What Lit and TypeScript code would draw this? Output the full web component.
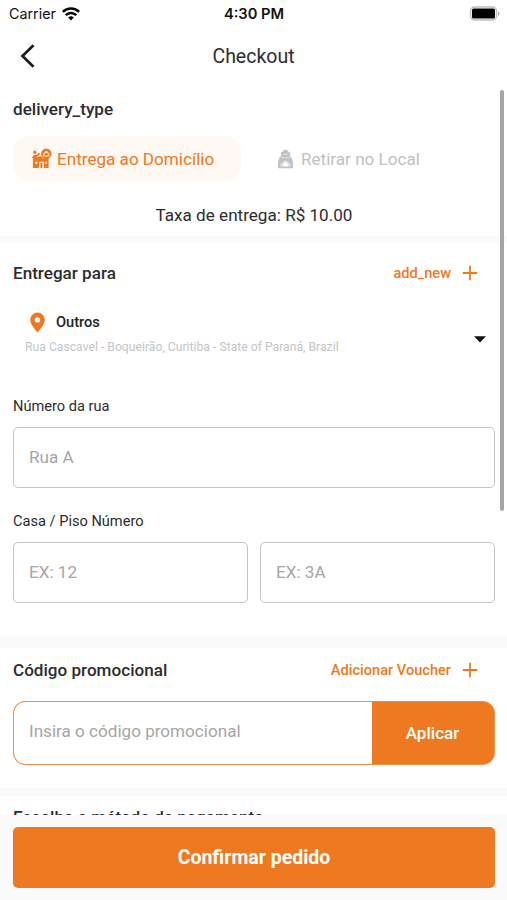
import { LitElement, html, css, svg } from "lit";
import { customElement, property } from "lit/decorators.js";

const plus = svg`<path d="M8 .8v14.400M.8 8h14.400" fill="none" stroke="currentColor" stroke-width="1.800"/>`;

@customElement("text-field")
class TextField extends LitElement {
  @property() hint = "";
  static styles = css`
    :host { display: flex; flex: 1; min-width: 0; }
    .box { flex: 1; box-sizing: border-box; height: 61px; border: 1.5px solid #c4c4c4; border-radius: 5px;
      padding: 0 15px 2px; display: flex; align-items: center; color: #a6a6a6; font-size: 17.1px; background: #fff; }
  `;
  render() {
    return html`<div class="box">${this.hint}</div>`;
  }
}

@customElement("app-root")
class AppRoot extends LitElement {
  static styles = css`
    :host { display: flex; flex-direction: column; width: 507px; height: 900px; overflow: hidden; position: relative;
      background: #fff; color: #2c2c2e; font-family: Roboto, sans-serif; font-size: 17.1px; white-space: nowrap; }
    * { box-sizing: border-box; }
    svg { display: block; flex: none; }
    .status { height: 27px; flex: none; display: grid; grid-template-columns: 1fr auto 1fr; align-items: center;
      padding: 0 7px 0 9px; font-family: Inter, sans-serif; font-size: 14.3px; color: #111; }
    .carrier { display: flex; align-items: center; gap: 6px; }
    .time { font-weight: 600; font-size: 14.7px; margin-right: 1px; }
    .battery { justify-self: end; }
    .nav { height: 57px; flex: none; display: grid; grid-template-columns: 1fr auto 1fr; align-items: center; padding: 1px 19px 0; }
    .title { font-size: 19.5px; }
    .scroll { flex: 1; min-height: 0; overflow: hidden; }
    .divider { background: #fafafa; }
    .d1 { height: 6px; }
    .d2 { height: 14px; }
    .d3 { height: 8px; }
    .section { padding: 0 12px 0 13px; }
    .heading { font-weight: 500; font-size: 17.1px; line-height: 24px; }
    .delivery { height: 152px; padding-top: 13px; }
    .tabs { display: grid; grid-template-columns: 228px 1fr; margin-top: 15px; gap: 15px; }
    .tab { height: 45px; border-radius: 16px; display: flex; align-items: center; gap: 4px; padding-left: 18px; color: #bfc1c4; }
    .tab.pickup { padding-left: 21px; gap: 7px; }
    .tab.active { background: #fff8f3; color: #ef7920; }
    .fee { text-align: center; line-height: 24px; margin-top: 22px; }
    .address { height: 392px; padding-top: 19px; }
    .row { display: flex; justify-content: space-between; align-items: center; height: 24px; }
    .action { display: flex; align-items: center; gap: 11px; color: #ef7920; font-weight: 500; font-size: 14.6px; padding-right: 17px; }
    .picker { display: flex; justify-content: space-between; align-items: center; height: 62px; margin-top: 23px; padding: 0 9px 0 12px; }
    .chosen { align-self: flex-start; padding-top: 2px; }
    .place { display: flex; align-items: center; gap: 10px; height: 24px; padding-left: 4px; font-weight: 500; font-size: 14.6px; color: #222; }
    .detail { color: #c3c5c8; font-size: 12.2px; line-height: 18px; margin-top: 4px; }
    .label { font-size: 14.6px; line-height: 20px; }
    .l1 { margin-top: 26px; }
    .l2 { margin-top: 23px; }
    .fields { display: flex; gap: 12px; margin-top: 11px; }
    .promo { height: 140px; padding-top: 10px; }
    .coupon { display: flex; height: 64px; margin-top: 19px; border: 1.5px solid #ef8f48; border-radius: 12px; overflow: hidden; background: #ef7920; }
    .code { flex: 1; display: flex; align-items: center; padding: 0 15px 4px; color: #a6a6a6; background: #fff; border-radius: 11px 0 0 11px; }
    .apply { width: 122px; padding-right: 1px; display: flex; align-items: center; justify-content: center; color: #fff; font-weight: 500; }
    .payment { padding-top: 9px; }
    .footer { flex: none; height: 85px; padding: 12px 12px 12px 13px; background: #fafafa; }
    .confirm { height: 61px; border-radius: 5px; background: #ef7920; color: #fff; font-weight: 700; font-size: 19.5px;
      display: flex; align-items: center; justify-content: center; }
    .thumb { position: absolute; right: 3px; top: 90px; width: 4px; height: 421px; border-radius: 2px; background: #a5a5a5; }
  `;

  render() {
    return html`
      <div class="status">
        <div class="carrier">
          <span>Carrier</span>
          <svg width="18" height="14" viewBox="0 0 18 14" fill="none" stroke="#000" stroke-width="2.500">
            <path d="M.8 4.900a11.600 11.600 0 0 1 16.400 0M3.700 8.100a7.500 7.500 0 0 1 10.600 0"/>
            <path d="M6.200 10.500a4 4 0 0 1 5.600 0L9 13.400z" fill="#000" stroke="none"/>
          </svg>
        </div>
        <div class="time">4:30 PM</div>
        <svg class="battery" width="31" height="15" viewBox="0 0 31 15">
          <rect x="1.500" y="1" width="26" height="13" rx="4" fill="#fff" stroke="#bcbcbc" stroke-width="1.400"/>
          <rect x="3" y="2.600" width="23" height="9.900" rx="1.500"/>
          <path d="M29 5.300q3 2.200 0 4.400z" fill="#a8a8a8"/>
        </svg>
      </div>
      <div class="nav">
        <svg width="18" height="26" viewBox="0 0 18 26"><path d="M14.500 2.200 3.500 13l11 10.800" fill="none" stroke="#1c1c1c" stroke-width="2.700"/></svg>
        <div class="title">Checkout</div>
      </div>
      <div class="scroll">
        <div class="section delivery">
          <div class="heading">delivery_type</div>
          <div class="tabs">
            <div class="tab active">
              <svg width="22" height="21" viewBox="0.700 0 20 20" fill="currentColor">
                <path d="M2 10 9.500 7.600l2.200 2.400H17v9H2z"/>
                <circle cx="3.800" cy="4" r="1.600"/>
                <path d="M1 9.300 3 6.600l3-.4L8 4.400l1 1.400-5.400 4.700z"/>
                <circle cx="14.800" cy="5.400" r="5"/>
                <path d="m11.800 9 2.800 4 2.700-4z"/>
                <path d="M12.400 5.600 14.800 3.300l2.400 2.300v2h-4.800z" fill="none" stroke="#fff8f3" stroke-width="1"/>
                <path d="M4.500 13h1.700v2H4.500zM8 13h4.400v6h-1.200v-4.600H9.200V19H8zM14 13h1.300v2H14z" fill="#fff8f3"/>
              </svg>
              <span>Entrega ao Domicílio</span>
            </div>
            <div class="tab pickup">
              <svg width="17" height="20" viewBox="0 0 17 20" fill="currentColor">
                <path d="M7 .8h3l1.500 1.900 1.600 1v4.600H4V3.700l1.500-1z"/>
                <path d="M3 7.600h11l1.900 5V19.200H1v-6.600z"/>
                <path d="M3.400 17.800v-2.600L6 12.400l2.500-.9 2.500.9 2.600 2.800v2.600z" fill="#dedfe0"/>
                <path d="M5.700 5.200h5.600M3.600 8.700h9.800" stroke="#e8e8e9" stroke-width=".8"/>
                <path d="M6.300 17.300v-2.600l2.200-1.600 2.200 1.600v2.600z" fill="#fff"/>
              </svg>
              <span>Retirar no Local</span>
            </div>
          </div>
          <div class="fee">Taxa de entrega: R$ 10.00</div>
        </div>
        <div class="divider d1"></div>
        <div class="section address">
          <div class="row">
            <div class="heading">Entregar para</div>
            <div class="action"><span>add_new</span><svg width="16" height="16" viewBox="0 0 16 16">${plus}</svg></div>
          </div>
          <div class="picker">
            <div class="chosen">
              <div class="place">
                <svg width="17" height="21" viewBox="0 0 17 21">
                  <path fill="#ef7920" fill-rule="evenodd" d="M8.500.5A7.300 7.300 0 0 0 1.200 7.800C1.200 13 8.500 20.500 8.500 20.500S15.800 13 15.800 7.800A7.300 7.300 0 0 0 8.500.5zm0 4.700a2.700 2.700 0 1 1 0 5.400 2.700 2.700 0 0 1 0-5.400z"/>
                </svg>
                <span>Outros</span>
              </div>
              <div class="detail">Rua Cascavel - Boqueirão, Curitiba - State of Paraná, Brazil</div>
            </div>
            <svg width="12" height="7" viewBox="0 0 12 7"><path d="M0 .3h12L6 6.500z" fill="#111"/></svg>
          </div>
          <div class="label l1">Número da rua</div>
          <div class="fields"><text-field hint="Rua A"></text-field></div>
          <div class="label l2">Casa / Piso Número</div>
          <div class="fields"><text-field hint="EX: 12"></text-field><text-field hint="EX: 3A"></text-field></div>
        </div>
        <div class="divider d2"></div>
        <div class="section promo">
          <div class="row">
            <div class="heading">Código promocional</div>
            <div class="action"><span>Adicionar Voucher</span><svg width="16" height="16" viewBox="0 0 16 16">${plus}</svg></div>
          </div>
          <div class="coupon">
            <div class="code">Insira o código promocional</div>
            <div class="apply">Aplicar</div>
          </div>
        </div>
        <div class="divider d3"></div>
        <div class="section payment"><div class="heading">Escolha o método de pagamento</div></div>
      </div>
      <div class="footer"><div class="confirm">Confirmar pedido</div></div>
      <div class="thumb"></div>
    `;
  }
}
